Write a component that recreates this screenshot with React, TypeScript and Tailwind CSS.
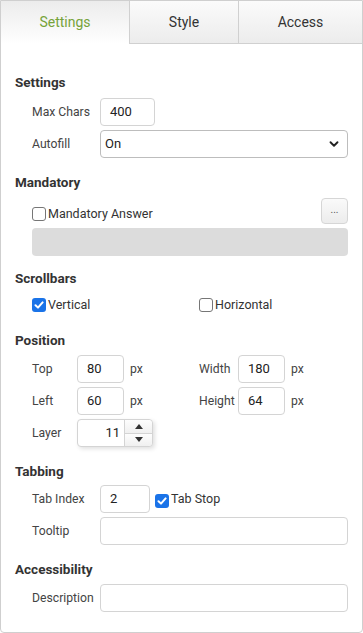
import { ChevronDown } from 'lucide-react'

const font = { fontFamily: 'Roboto, "Liberation Sans", sans-serif' }

function Check({ checked }: { checked?: boolean }) {
  if (checked) {
    return (
      <span className="w-[14px] h-[14px] rounded-[3px] bg-[#1a73e8] flex items-center justify-center shrink-0">
        <svg width="10" height="10" viewBox="0 0 10 10">
          <path d="M1.5 5.2 L4 7.6 L8.6 2.4" stroke="white" strokeWidth="2" fill="none" strokeLinecap="round" strokeLinejoin="round" />
        </svg>
      </span>
    )
  }
  return <span className="w-[14px] h-[14px] rounded-[3px] border border-[#767676] bg-white shrink-0" />
}

function Heading({ children, className = '' }: { children: React.ReactNode; className?: string }) {
  return <div className={`h-5 leading-5 text-[13.5px] font-bold text-[#333] ${className}`}>{children}</div>
}

function Input({ value = '', className = '', right = false }: { value?: string; className?: string; right?: boolean }) {
  return (
    <div className={`h-[28px] border border-[#d4d4d4] rounded-[4px] bg-white flex items-center px-[9px] text-[13px] text-[#222] ${right ? 'justify-end' : ''} ${className}`}>
      {value}
    </div>
  )
}

function Tab({ label, active }: { label: string; active?: boolean }) {
  return (
    <div
      className={
        active
          ? 'flex items-center justify-center h-[43px] bg-gradient-to-b from-[#ececec] to-white text-[#76a33a] text-[14px]'
          : 'flex items-center justify-center h-[43px] bg-gradient-to-b from-[#fbfbfb] to-[#ececec] border-b border-l border-[#d0d0d0] text-[#333] text-[14px]'
      }
    >
      {label}
    </div>
  )
}

export default function App() {
  return (
    <div className="w-[363px] h-[633px] bg-white" style={font}>
      <div className="h-[633px] border border-[#cfcfcf] rounded-b-[4px] flex flex-col">
        <div className="grid grid-cols-[128px_109px_1fr]">
          <Tab label="Settings" active />
          <Tab label="Style" />
          <Tab label="Access" />
        </div>

        <div className="px-[14px] text-[12.2px] text-[#444]">
          <Heading className="mt-[28px]">Settings</Heading>
          <div className="mt-[6px] flex items-center pl-[17px]">
            <span className="w-[68px]">Max Chars</span>
            <Input value="400" className="w-[55px]" />
          </div>
          <div className="mt-[4px] flex items-center pl-[17px]">
            <span className="w-[68px]">Autofill</span>
            <div className="h-[28px] flex-1 border border-[#bdbdbd] rounded-[4px] bg-white flex items-center justify-between pl-[4px] pr-[6px] text-[13px] text-[#222]">
              <span>On</span>
              <ChevronDown size={14} strokeWidth={3.2} color="#222" />
            </div>
          </div>

          <Heading className="mt-[14px]">Mandatory</Heading>
          <div className="mt-[6px] flex items-center justify-between pl-[17px]">
            <div className="flex items-center gap-[2px] mt-[6px]">
              <Check />
              <span className="text-[#333] text-[12.5px]">Mandatory Answer</span>
            </div>
            <div className="w-[27px] h-[26px] rounded-[4px] border border-[#d6d6d6] bg-gradient-to-b from-[#fafafa] to-[#ececec] flex items-center justify-center text-[10px] text-[#555] leading-none pb-[3px]">
              ...
            </div>
          </div>
          <div className="mt-[4px] ml-[17px] h-[28px] rounded-[4px] bg-[#dcdcdc]" />

          <Heading className="mt-[12px]">Scrollbars</Heading>
          <div className="mt-[7px] h-5 flex items-center pl-[17px]">
            <div className="w-[167px] flex items-center gap-[2px]">
              <Check checked />
              <span className="text-[#333] text-[12.5px]">Vertical</span>
            </div>
            <div className="flex items-center gap-[2px]">
              <Check />
              <span className="text-[#333] text-[12.5px]">Horizontal</span>
            </div>
          </div>

          <Heading className="mt-[15px]">Position</Heading>
          <div className="mt-[5px] flex items-center pl-[17px]">
            <span className="w-[45px]">Top</span>
            <Input value="80" className="w-[47px]" />
            <span className="w-[75px] pl-[6px]">px</span>
            <span className="w-[39px]">Width</span>
            <Input value="180" className="w-[47px]" />
            <span className="pl-[6px]">px</span>
          </div>
          <div className="mt-[4px] flex items-center pl-[17px]">
            <span className="w-[45px]">Left</span>
            <Input value="60" className="w-[47px]" />
            <span className="w-[75px] pl-[6px]">px</span>
            <span className="w-[39px]">Height</span>
            <Input value="64" className="w-[47px]" />
            <span className="pl-[6px]">px</span>
          </div>
          <div className="mt-[4px] flex items-center pl-[17px]">
            <span className="w-[45px]">Layer</span>
            <div className="h-[28px] w-[76px] flex border border-[#d4d4d4] rounded-[4px] bg-white shadow-[2px_2px_4px_rgba(0,0,0,0.12)]">
              <div className="flex-1 flex items-center justify-end pr-[4px] text-[13px] text-[#222]">11</div>
              <div className="w-[28px] flex flex-col border-l border-[#d4d4d4]">
                <div className="flex-1 flex items-center justify-center bg-gradient-to-b from-[#fdfdfd] to-[#f0f0f0] border-b border-[#d4d4d4] rounded-tr-[4px]">
                  <svg width="8" height="5" viewBox="0 0 8 5"><path d="M0 5 L4 0 L8 5 Z" fill="#333" /></svg>
                </div>
                <div className="flex-1 flex items-center justify-center bg-gradient-to-b from-[#fdfdfd] to-[#f0f0f0] rounded-br-[4px]">
                  <svg width="8" height="5" viewBox="0 0 8 5"><path d="M0 0 L8 0 L4 5 Z" fill="#333" /></svg>
                </div>
              </div>
            </div>
          </div>

          <Heading className="mt-[14px]">Tabbing</Heading>
          <div className="mt-[4px] flex items-center pl-[17px]">
            <span className="w-[68px]">Tab Index</span>
            <Input value="2" className="w-[50px]" />
            <div className="ml-[5px] flex items-center gap-[2px]">
              <span className="mt-[4px]"><Check checked /></span>
              <span className="text-[#333] text-[12.5px]">Tab Stop</span>
            </div>
          </div>
          <div className="mt-[4px] flex items-center pl-[17px]">
            <span className="w-[68px]">Tooltip</span>
            <Input className="flex-1" />
          </div>

          <Heading className="mt-[14px]">Accessibility</Heading>
          <div className="mt-[5px] flex items-center pl-[17px]">
            <span className="w-[68px]">Description</span>
            <Input className="flex-1" />
          </div>
        </div>
      </div>
    </div>
  )
}
